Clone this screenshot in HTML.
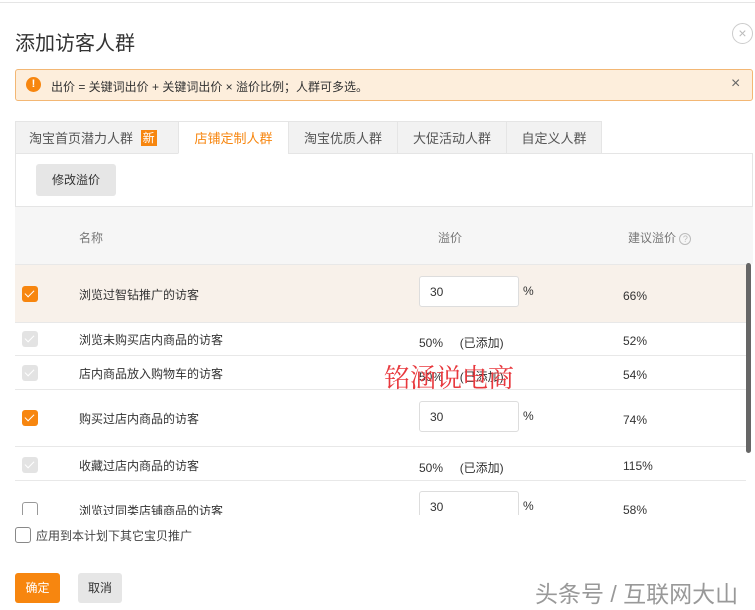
<!DOCTYPE html>
<html><head><meta charset="utf-8"><style>
*{margin:0;padding:0;box-sizing:border-box}
body{width:755px;height:610px;background:#fff;font-family:"Liberation Sans","Noto Sans CJK SC",sans-serif;color:#333;position:relative;overflow:hidden;font-size:12px}
.a{position:absolute;white-space:nowrap}
.cb{position:absolute;width:16px;height:16px;border-radius:3px}
.on{background:#f7860f}
.on:after{content:"";position:absolute;left:5px;top:2px;width:4px;height:8px;border:solid #fff;border-width:0 1.5px 1.5px 0;transform:rotate(45deg)}
.dis{background:#e3e3e3}
.dis:after{content:"";position:absolute;left:5px;top:2px;width:4px;height:8px;border:solid #fff;border-width:0 1.5px 1.5px 0;transform:rotate(45deg)}
.off{border:1px solid #999;background:#fff}
.inp{position:absolute;width:100px;height:31px;border:1px solid #ddd;border-radius:3px;background:#fff;padding:8px 0 0 10px}
.tab{position:absolute;top:121px;height:33px;background:#f2f2f2;border:1px solid #e5e5e5;font-size:13px;color:#555;text-align:center;line-height:33px}
.line{position:absolute;left:15px;width:731px;height:1px;background:#e8e8e8}
</style></head><body>
<div class="a" style="left:0;top:2px;width:755px;height:1px;background:#e5e5e5"></div>
<div class="a" style="left:15px;top:27px;font-size:20px;color:#333">添加访客人群</div>
<div class="a" style="left:732px;top:23px;width:21px;height:21px;border:1px solid #ccc;border-radius:50%;color:#bbb;font-size:14px;text-align:center;line-height:19px">×</div>
<div class="a" style="left:15px;top:69px;width:738px;height:32px;background:#fdeedc;border:1px solid #f3b774;border-radius:3px"></div>
<div class="a" style="left:26px;top:77px;width:15px;height:15px;border-radius:50%;background:#f7860f;color:#fff;font-size:11px;font-weight:bold;text-align:center;line-height:15px">!</div>
<div class="a" style="left:51px;top:78px;font-size:12px;color:#333">出价 = 关键词出价 + 关键词出价 × 溢价比例；人群可多选。</div>
<div class="a" style="left:731px;top:75px;font-size:16px;color:#666">×</div>
<div class="a" style="left:15px;top:153px;width:738px;height:54px;border:1px solid #e5e5e5"></div>
<div class="tab" style="left:15px;width:164px;text-align:left;padding-left:13px">淘宝首页潜力人群 <span style="display:inline-block;background:#f7860f;color:#fff;font-size:12px;line-height:16px;padding:0 2px;vertical-align:1px;margin-left:4px">新</span></div>
<div class="tab" style="left:178px;width:111px;background:#fff;border-bottom-color:#fff;color:#f7860f">店铺定制人群</div>
<div class="tab" style="left:288px;width:110px">淘宝优质人群</div>
<div class="tab" style="left:397px;width:110px">大促活动人群</div>
<div class="tab" style="left:506px;width:96px">自定义人群</div>
<div class="a" style="left:36px;top:164px;width:80px;height:32px;background:#e6e6e6;border-radius:3px;text-align:center;line-height:32px;font-size:12px;color:#333">修改溢价</div>
<div class="a" style="left:15px;top:207px;width:738px;height:57px;background:#f6f6f6"></div>
<div class="a" style="left:79px;top:229px;color:#777">名称</div>
<div class="a" style="left:438px;top:229px;color:#777">溢价</div>
<div class="a" style="left:628px;top:229px;color:#777">建议溢价 <span style="display:inline-block;width:12px;height:12px;border:1px solid #bbb;border-radius:50%;font-size:9px;line-height:10px;text-align:center;color:#bbb">?</span></div>
<div class="a" style="left:15px;top:264px;width:731px;height:58px;background:#f8f1ea;border-top:1px solid #e8e8e8"></div>
<div class="line" style="top:322px"></div><div class="line" style="top:355px"></div><div class="line" style="top:389px"></div><div class="line" style="top:446px"></div><div class="line" style="top:480px"></div>
<div class="cb on" style="left:22px;top:286px"></div>
<div class="a" style="left:79px;top:286px">浏览过智钻推广的访客</div>
<div class="inp" style="left:419px;top:276px">30</div><div class="a" style="left:523px;top:284px">%</div><div class="a" style="left:623px;top:289px">66%</div>
<div class="cb dis" style="left:22px;top:331px"></div>
<div class="a" style="left:79px;top:331px">浏览未购买店内商品的访客</div>
<div class="a" style="left:419px;top:334px">50%&nbsp;&nbsp;&nbsp;&nbsp;&nbsp;(已添加)</div><div class="a" style="left:623px;top:334px">52%</div>
<div class="cb dis" style="left:22px;top:365px"></div>
<div class="a" style="left:79px;top:365px">店内商品放入购物车的访客</div>
<div class="a" style="left:419px;top:368px">50%&nbsp;&nbsp;&nbsp;&nbsp;&nbsp;(已添加)</div><div class="a" style="left:623px;top:368px">54%</div>
<div class="a" style="left:384px;top:358px;font-size:26px;color:#e8383d;font-family:'Noto Serif CJK SC',serif">铭涵说电商</div>
<div class="cb on" style="left:22px;top:410px"></div>
<div class="a" style="left:79px;top:410px">购买过店内商品的访客</div>
<div class="inp" style="left:419px;top:401px">30</div><div class="a" style="left:523px;top:409px">%</div><div class="a" style="left:623px;top:413px">74%</div>
<div class="cb dis" style="left:22px;top:457px"></div>
<div class="a" style="left:79px;top:457px">收藏过店内商品的访客</div>
<div class="a" style="left:419px;top:459px">50%&nbsp;&nbsp;&nbsp;&nbsp;&nbsp;(已添加)</div><div class="a" style="left:623px;top:459px">115%</div>
<div class="a" style="left:0;top:481px;width:746px;height:34px;overflow:hidden">
<div class="cb off" style="left:22px;top:21px"></div>
<div class="a" style="left:79px;top:21px">浏览过同类店铺商品的访客</div>
<div class="inp" style="left:419px;top:10px">30</div><div class="a" style="left:523px;top:18px">%</div><div class="a" style="left:623px;top:22px">58%</div>
</div>
<div class="a" style="left:746px;top:263px;width:5px;height:190px;background:#666;border-radius:3px"></div>
<div class="cb off" style="left:15px;top:527px;border-color:#888"></div>
<div class="a" style="left:36px;top:527px;color:#444">应用到本计划下其它宝贝推广</div>
<div class="a" style="left:15px;top:573px;width:45px;height:30px;background:#f7860f;border-radius:3px;color:#fff;text-align:center;line-height:30px">确定</div>
<div class="a" style="left:78px;top:573px;width:44px;height:30px;background:#e6e6e6;border-radius:3px;color:#333;text-align:center;line-height:30px">取消</div>
<div class="a" style="left:535px;top:575px;font-size:23px;color:#999">头条号 / 互联网大山</div>
</body></html>
